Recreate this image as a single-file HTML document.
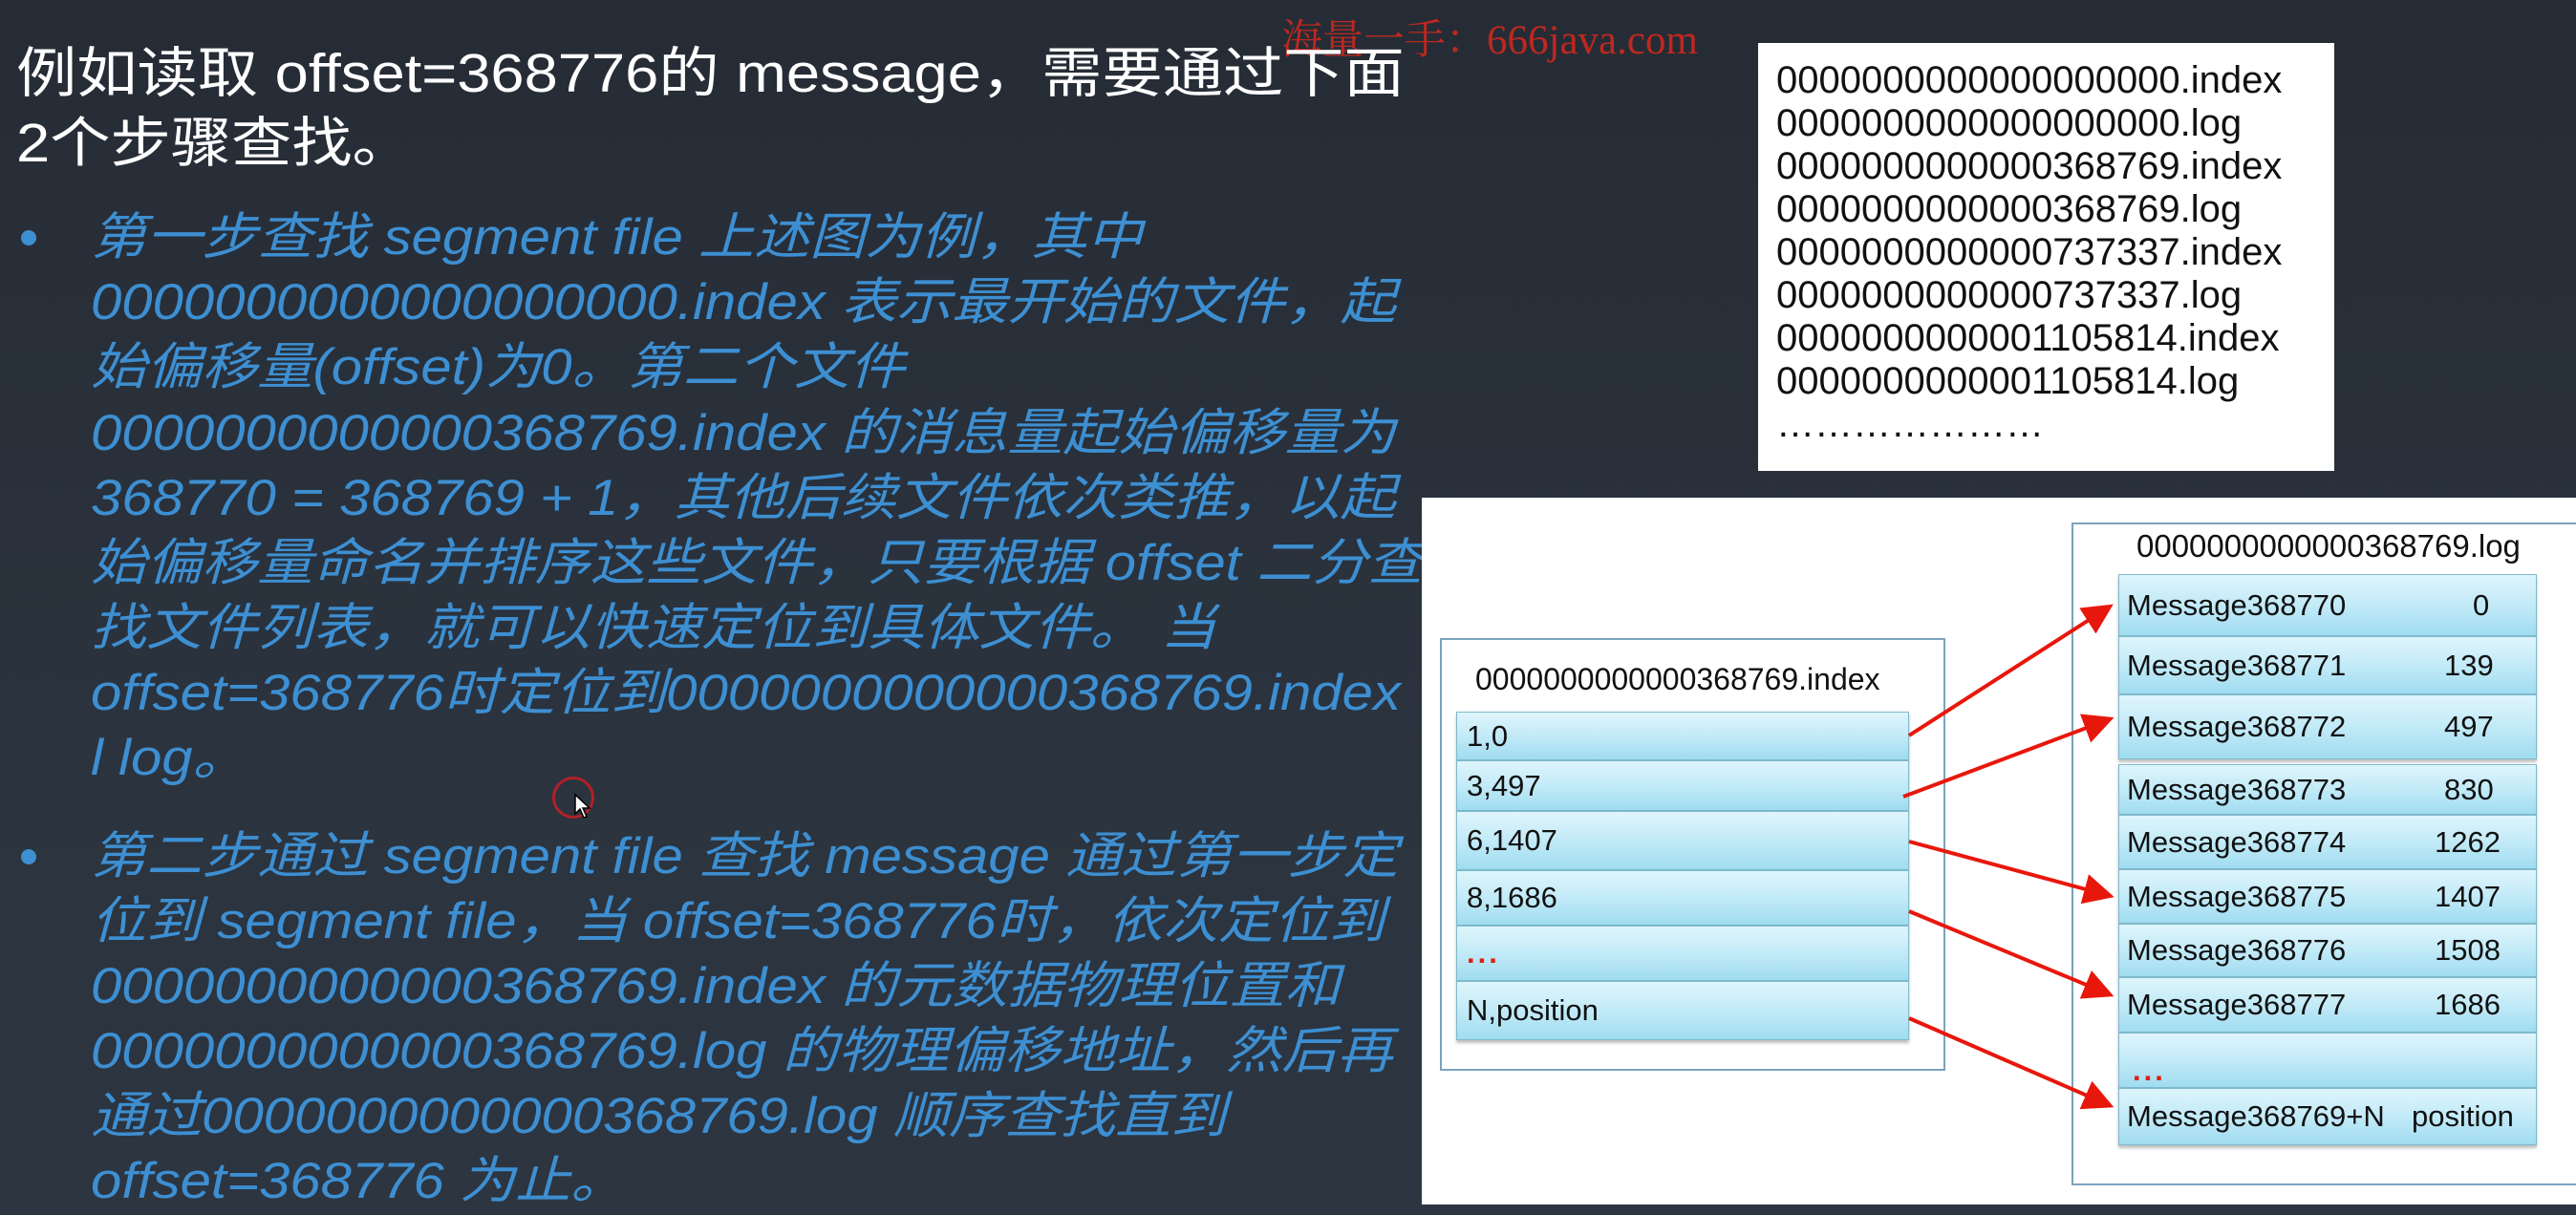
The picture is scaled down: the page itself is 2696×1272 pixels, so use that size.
<!DOCTYPE html>
<html><head><meta charset="utf-8"><style>
*{margin:0;padding:0}
body{width:2696px;height:1272px;background:linear-gradient(180deg,#262c35 0%,#2b333e 60%,#2d3540 100%);position:relative;overflow:hidden;font-family:"Liberation Sans","Noto Sans CJK SC",sans-serif}
.a{position:absolute;white-space:nowrap}
.t{color:#fff;font-size:57px;left:17px;line-height:72px;transform:scaleX(1.11);transform-origin:0 50%}
.b{color:#3d8fd2;font-size:53px;font-style:italic;left:95px;line-height:68px;transform:scaleX(1.096);transform-origin:0 50%}
.dot{position:absolute;width:16px;height:16px;border-radius:50%;background:#3d8fd2;left:22px}
.mono{font-size:40px;color:#111;left:1859px;line-height:45px}
.row{position:absolute;background:linear-gradient(180deg,#dff5fc 0%,#bfe9f7 55%,#9fdcf0 100%);border:1px solid #7fb9cc;box-shadow:0 3px 3px rgba(0,0,0,.25);box-sizing:border-box;font-size:31px;color:#111}
.row span{position:absolute;top:50%;transform:translateY(-50%)}
.red{color:#e02010;font-weight:bold;letter-spacing:3px}
</style></head><body>
<div class="a" style="left:1341px;top:8px;font-family:'Liberation Serif','Noto Serif CJK SC',serif;font-size:43px;color:#d8281c;opacity:.85">海量一手：666java.com</div>
<div class="a t" style="top:41px">例如读取 offset=368776的 message，需要通过下面</div>
<div class="a t" style="top:114px">2个步骤查找。</div>

<div class="dot" style="top:241px"></div>
<div class="a b" style="top:215px">第一步查找 segment file 上述图为例，其中</div>
<div class="a b" style="top:283px">0000000000000000000.index 表示最开始的文件，起</div>
<div class="a b" style="top:351px">始偏移量(offset)为0。第二个文件</div>
<div class="a b" style="top:420px">0000000000000368769.index 的消息量起始偏移量为</div>
<div class="a b" style="top:488px">368770 = 368769 + 1，其他后续文件依次类推，以起</div>
<div class="a b" style="top:556px">始偏移量命名并排序这些文件，只要根据 offset 二分查</div>
<div class="a b" style="top:624px">找文件列表，就可以快速定位到具体文件。 当</div>
<div class="a b" style="top:692px">offset=368776时定位到0000000000000368769.index</div>
<div class="a b" style="top:760px">l log。</div>

<div style="position:absolute;left:578px;top:813px;width:44px;height:44px;border-radius:50%;border:3px solid #b0202a;box-sizing:border-box"></div>
<svg class="a" style="left:600px;top:830px" width="20" height="28"><path d="M2 2 L2 22 L7 17 L11 26 L14 25 L10 16 L17 16 Z" fill="#fff" stroke="#000" stroke-width="1.5"/></svg>

<div class="dot" style="top:889px"></div>
<div class="a b" style="top:863px">第二步通过 segment file 查找 message 通过第一步定</div>
<div class="a b" style="top:931px">位到 segment file，当 offset=368776时，依次定位到</div>
<div class="a b" style="top:999px">0000000000000368769.index 的元数据物理位置和</div>
<div class="a b" style="top:1067px">0000000000000368769.log 的物理偏移地址，然后再</div>
<div class="a b" style="top:1135px">通过0000000000000368769.log 顺序查找直到</div>
<div class="a b" style="top:1203px">offset=368776 为止。</div>

<div style="position:absolute;left:1840px;top:45px;width:603px;height:448px;background:#fff"></div>
<div class="a mono" style="top:62px">0000000000000000000.index</div>
<div class="a mono" style="top:107px">0000000000000000000.log</div>
<div class="a mono" style="top:152px">0000000000000368769.index</div>
<div class="a mono" style="top:197px">0000000000000368769.log</div>
<div class="a mono" style="top:242px">0000000000000737337.index</div>
<div class="a mono" style="top:287px">0000000000000737337.log</div>
<div class="a mono" style="top:332px">0000000000001105814.index</div>
<div class="a mono" style="top:377px">0000000000001105814.log</div>
<div class="a mono" style="top:422px">…………………</div>

<div style="position:absolute;left:1488px;top:521px;width:1208px;height:740px;background:#fff"></div>
<div style="position:absolute;left:1507px;top:668px;width:529px;height:453px;border:2px solid #7aa3bd;box-sizing:border-box"></div>
<div class="a" style="left:1544px;top:693px;font-size:32px;color:#111">0000000000000368769.index</div>
<div class="row" style="left:1524px;top:745px;width:474px;height:51px"><span style="left:10px">1,0</span></div>
<div class="row" style="left:1524px;top:796px;width:474px;height:53px"><span style="left:10px">3,497</span></div>
<div class="row" style="left:1524px;top:849px;width:474px;height:62px"><span style="left:10px">6,1407</span></div>
<div class="row" style="left:1524px;top:911px;width:474px;height:58px"><span style="left:10px">8,1686</span></div>
<div class="row" style="left:1524px;top:969px;width:474px;height:58px"><span class="red" style="left:10px">...</span></div>
<div class="row" style="left:1524px;top:1027px;width:474px;height:62px"><span style="left:10px">N,position</span></div>

<div style="position:absolute;left:2168px;top:547px;width:540px;height:694px;border:2px solid #7aa3bd;box-sizing:border-box"></div>
<div class="a" style="left:2236px;top:553px;font-size:33px;color:#111">0000000000000368769.log</div>
<div class="row" style="left:2217px;top:601px;width:438px;height:65px"><span style="left:8px">Message368770</span><span style="left:370px">0</span></div>
<div class="row" style="left:2217px;top:666px;width:438px;height:61px"><span style="left:8px">Message368771</span><span style="left:340px">139</span></div>
<div class="row" style="left:2217px;top:727px;width:438px;height:68px"><span style="left:8px">Message368772</span><span style="left:340px">497</span></div>
<div class="row" style="left:2217px;top:800px;width:438px;height:53px"><span style="left:8px">Message368773</span><span style="left:340px">830</span></div>
<div class="row" style="left:2217px;top:853px;width:438px;height:57px"><span style="left:8px">Message368774</span><span style="left:330px">1262</span></div>
<div class="row" style="left:2217px;top:910px;width:438px;height:57px"><span style="left:8px">Message368775</span><span style="left:330px">1407</span></div>
<div class="row" style="left:2217px;top:967px;width:438px;height:56px"><span style="left:8px">Message368776</span><span style="left:330px">1508</span></div>
<div class="row" style="left:2217px;top:1023px;width:438px;height:58px"><span style="left:8px">Message368777</span><span style="left:330px">1686</span></div>
<div class="row" style="left:2217px;top:1081px;width:438px;height:58px"><span class="red" style="left:14px;top:70%">...</span></div>
<div class="row" style="left:2217px;top:1139px;width:438px;height:60px"><span style="left:8px">Message368769+N</span><span style="left:306px">position</span></div>

<svg class="a" style="left:0;top:0" width="2696" height="1272">
<defs><marker id="m" markerWidth="8" markerHeight="8" refX="6" refY="4" orient="auto" markerUnits="strokeWidth"><path d="M0 0 L8 4 L0 8 Z" fill="#e8170c"/></marker></defs>
<g stroke="#e8170c" stroke-width="4" fill="none" marker-end="url(#m)">
<path d="M1998 770 L2205 637"/>
<path d="M1992 834 L2205 754"/>
<path d="M1998 881 L2205 937"/>
<path d="M1998 954 L2205 1040"/>
<path d="M1998 1066 L2205 1156"/>
</g></svg>
</body></html>
